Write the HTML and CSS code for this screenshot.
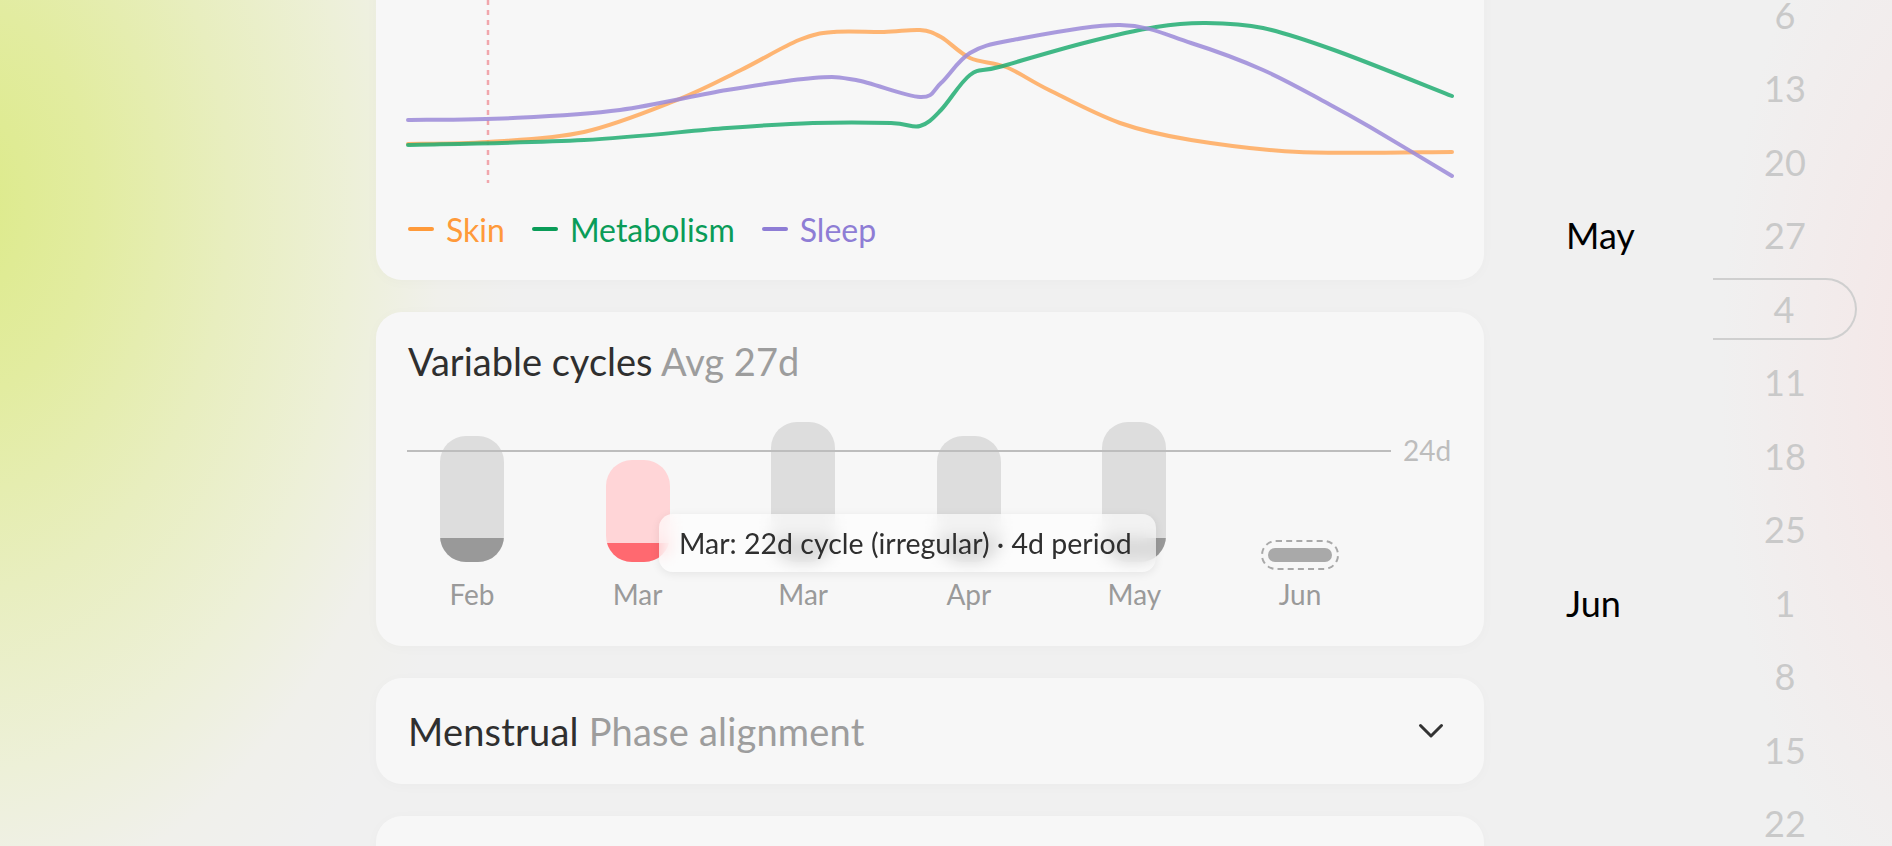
FILE: index.html
```html
<!DOCTYPE html>
<html lang="en">
<head>
<meta charset="utf-8">
<title>Cycle insights</title>
<link rel="stylesheet" href="styles.css">
</head>
<body>
<div class="page">
  <main class="feed">
    <section class="card chart-card">
      <svg class="trend" viewBox="0 0 1044 192" width="1044" height="192">
        <line class="today-line" x1="80" y1="-12" x2="80" y2="191"/>
        <path class="trend-line skin" d="M0,152 C13.3,151.7 50.7,152 80,150 S144.5,147 176,140 S242.8,118.3 269,108 S312.7,88 333,78 S375.5,54.3 391,48 S411.8,41.3 426,40 S461.7,40.3 476,40 S502.5,37.2 512,38 S524.7,40.3 533,45 S551.2,61 562,66 S584.8,69.7 598,75 S622,88.7 641,98 S688.3,122.7 712,131 S753.2,143.2 783,148 S847.5,158 891,160 S1018.5,160 1044,160"/>
        <path class="trend-line metabolism" d="M0,153 C29.3,152.2 122.8,150.8 176,148 S280.8,138.8 319,136 S377.7,131.8 405,131 S465.2,130.5 483,131 S503.7,136.2 512,134 S524.7,126.5 533,118 S552.3,90.2 562,83 S572,80.3 591,75 S649.8,57.7 676,51 S727.7,38.3 748,35 S780.2,30.8 798,31 S833.7,31.5 855,36 S894.5,46.7 926,58 S1024.3,96.3 1044,104"/>
        <path class="trend-line sleep" d="M0,128 C17.5,127.7 69.7,127.7 105,126 S176.3,122.7 212,118 S286.8,103.3 319,98 S383.5,87.7 405,86 S430.2,84.8 448,88 S497.8,104.5 512,105 S524.7,98.3 533,91 S550,68.2 562,61 S580,52.7 605,48 S682.3,32.5 712,33 S759.2,43.5 783,51 S832.3,68 855,78 S901.2,101.5 919,111 S941.2,122.8 962,135 S1030.3,175.8 1044,184"/>
      </svg>
      <div class="legend">
        <span class="legend-item skin">Skin</span>
        <span class="legend-item metabolism">Metabolism</span>
        <span class="legend-item sleep">Sleep</span>
      </div>
    </section>

    <section class="card cycles-card">
      <h2 class="card-title">Variable cycles <span class="muted">Avg 27d</span></h2>
      <div class="bars">
        <div class="ref-line"></div>
        <div class="ref-label">24d</div>
        <div class="bar-col">
          <div class="bar-slot"><div class="bar" style="height:126px"><div class="bar-period" style="height:24px"></div></div></div>
          <div class="bar-label">Feb</div>
        </div>
        <div class="bar-col">
          <div class="bar-slot"><div class="bar irregular" style="height:102px"><div class="bar-period" style="height:19px"></div></div></div>
          <div class="bar-label">Mar</div>
        </div>
        <div class="bar-col">
          <div class="bar-slot"><div class="bar" style="height:140px"><div class="bar-period" style="height:24px"></div></div></div>
          <div class="bar-label">Mar</div>
        </div>
        <div class="bar-col">
          <div class="bar-slot"><div class="bar" style="height:126px"><div class="bar-period" style="height:24px"></div></div></div>
          <div class="bar-label">Apr</div>
        </div>
        <div class="bar-col">
          <div class="bar-slot"><div class="bar" style="height:140px"><div class="bar-period" style="height:24px"></div></div></div>
          <div class="bar-label">May</div>
        </div>
        <div class="bar-col">
          <div class="bar-slot"><div class="bar-planned"><div class="bar-stub"></div></div></div>
          <div class="bar-label">Jun</div>
        </div>
      </div>
      <div class="tooltip">Mar: 22d cycle (irregular) · 4d period</div>
    </section>

    <section class="card collapsed-card">
      <h2 class="card-title">Menstrual <span class="muted">Phase alignment</span></h2>
      <svg class="chevron" viewBox="0 0 26 16" width="26" height="16">
        <path d="M2.5,2.5 L13,13 L23.5,2.5"/>
      </svg>
    </section>

    <section class="card collapsed-card next"></section>
  </main>

  <aside class="calendar">
    <span class="month"></span><span class="day">6</span>
    <span class="month"></span><span class="day">13</span>
    <span class="month"></span><span class="day">20</span>
    <span class="month">May</span><span class="day">27</span>
    <span class="month"></span><span class="day current">4</span>
    <span class="month"></span><span class="day">11</span>
    <span class="month"></span><span class="day">18</span>
    <span class="month"></span><span class="day">25</span>
    <span class="month">Jun</span><span class="day">1</span>
    <span class="month"></span><span class="day">8</span>
    <span class="month"></span><span class="day">15</span>
    <span class="month"></span><span class="day">22</span>
  </aside>
</div>
</body>
</html>
```

FILE: styles.css
```css
* {
  box-sizing: border-box;
  margin: 0;
  padding: 0;
}

html,
body {
  width: 1892px;
  height: 846px;
  overflow: hidden;
}

body {
  font-family: "Lato", "Noto Sans", sans-serif;
  background:
    radial-gradient(ellipse 240px 560px at 1960px 380px, rgba(246, 228, 228, 0.9), rgba(240, 240, 240, 0) 100%),
    radial-gradient(ellipse 560px 820px at -40px 200px, #dcea88 0%, #e2eca0 24%, #e8eebf 48%, #edf0d8 70%, #f0f0eb 86%, rgba(240, 240, 240, 0) 100%),
    #f0f0f0;
}

.page {
  display: flex;
  height: 846px;
  padding-left: 376px;
}

.feed {
  width: 1108px;
  flex: none;
  display: flex;
  flex-direction: column;
  gap: 32px;
  margin-top: -40px;
}

.card {
  background: #f7f7f7;
  border-radius: 26px;
  box-shadow: 0 2px 14px rgba(0, 0, 0, 0.025);
}

/* trend chart */
.chart-card {
  padding: 32px 32px 31px;
}

.trend {
  display: block;
  width: 1044px;
  height: 192px;
  overflow: visible;
}

.today-line {
  stroke: #f1a7ad;
  stroke-width: 2.5;
  stroke-dasharray: 5 5;
}

.trend-line {
  fill: none;
  stroke-width: 4;
  stroke-linecap: round;
  stroke-linejoin: round;
  opacity: 0.85;
}

.trend-line.skin { stroke: #ffa95c; }
.trend-line.metabolism { stroke: #21ad72; }
.trend-line.sleep { stroke: #9b8ad8; }

.legend {
  display: flex;
  align-items: center;
  height: 40px;
  margin-top: 25px;
  gap: 27px;
  font-size: 32px;
}

.legend-item {
  display: flex;
  align-items: center;
  gap: 12px;
}

.legend-item::before {
  content: "";
  width: 26px;
  height: 3.5px;
  border-radius: 2px;
  background: currentColor;
}

.legend-item.skin { color: #ff9a3a; }
.legend-item.metabolism { color: #0a9c58; }
.legend-item.sleep { color: #8e7dd5; }

/* cycles */
.cycles-card {
  position: relative;
  padding: 26px 32px 35px;
}

.card-title {
  font-size: 38px;
  line-height: 46px;
  font-weight: 400;
  color: #2f2f2f;
  white-space: nowrap;
}

.muted {
  color: #9d9d9d;
}

.bars {
  position: relative;
  display: flex;
  gap: 37.6px;
  margin-top: 38px;
}

.ref-line {
  position: absolute;
  left: -1px;
  top: 28px;
  width: 984px;
  height: 2px;
  background: #bdbdbd;
  z-index: 2;
}

.ref-label {
  position: absolute;
  left: 995px;
  top: 11px;
  font-size: 28px;
  line-height: 34px;
  color: #bdbdbd;
}

.bar-col {
  width: 128px;
  display: flex;
  flex-direction: column;
  align-items: center;
}

.bar-slot {
  height: 140px;
  display: flex;
  align-items: flex-end;
}

.bar {
  width: 64px;
  border-radius: 26px;
  background: #dddddd;
  overflow: hidden;
  display: flex;
  flex-direction: column;
  justify-content: flex-end;
}

.bar-period {
  background: #999999;
}

.bar.irregular {
  background: #ffd5d7;
}

.bar.irregular .bar-period {
  background: #ff6970;
}

.bar-planned {
  border: 2.5px dashed #a9a9a9;
  border-radius: 20px;
  padding: 6px 5px;
  margin-bottom: -8px;
}

.bar-stub {
  width: 64px;
  height: 14px;
  border-radius: 7px;
  background: #a9a9a9;
}

.bar-label {
  margin-top: 15px;
  font-size: 28px;
  line-height: 34px;
  color: #9a9a9a;
}

.tooltip {
  position: absolute;
  left: 283px;
  top: 202px;
  width: 497px;
  height: 58px;
  display: flex;
  align-items: center;
  padding: 0 20px;
  border-radius: 14px;
  background: rgba(255, 255, 255, 0.62);
  backdrop-filter: blur(8px);
  box-shadow: 0 2px 10px rgba(0, 0, 0, 0.08);
  font-size: 28.5px;
  color: #2f2f2f;
  white-space: nowrap;
  z-index: 5;
}

/* collapsed cards */
.collapsed-card {
  height: 106px;
  flex: none;
  display: flex;
  align-items: center;
  justify-content: space-between;
  padding: 0 40px 0 32px;
}

.collapsed-card .card-title {
  letter-spacing: 0.2px;
}

.collapsed-card.next {
  height: 200px;
}

.chevron {
  display: block;
  fill: none;
  stroke: #333333;
  stroke-width: 3;
  stroke-linecap: round;
  stroke-linejoin: round;
}

/* calendar rail */
.calendar {
  margin-left: 82px;
  margin-top: -22px;
  display: grid;
  grid-template-columns: 147px 144px;
  grid-auto-rows: 73.5px;
  align-items: center;
  align-content: start;
}

.month {
  font-size: 36px;
  color: #000000;
}

.day {
  font-size: 36px;
  color: #c9c9c9;
  text-align: center;
}

.day.current {
  height: 62px;
  display: flex;
  align-items: center;
  justify-content: center;
  border: 2.5px solid #cfcfcf;
  border-left: none;
  border-radius: 0 31px 31px 0;
}
```
